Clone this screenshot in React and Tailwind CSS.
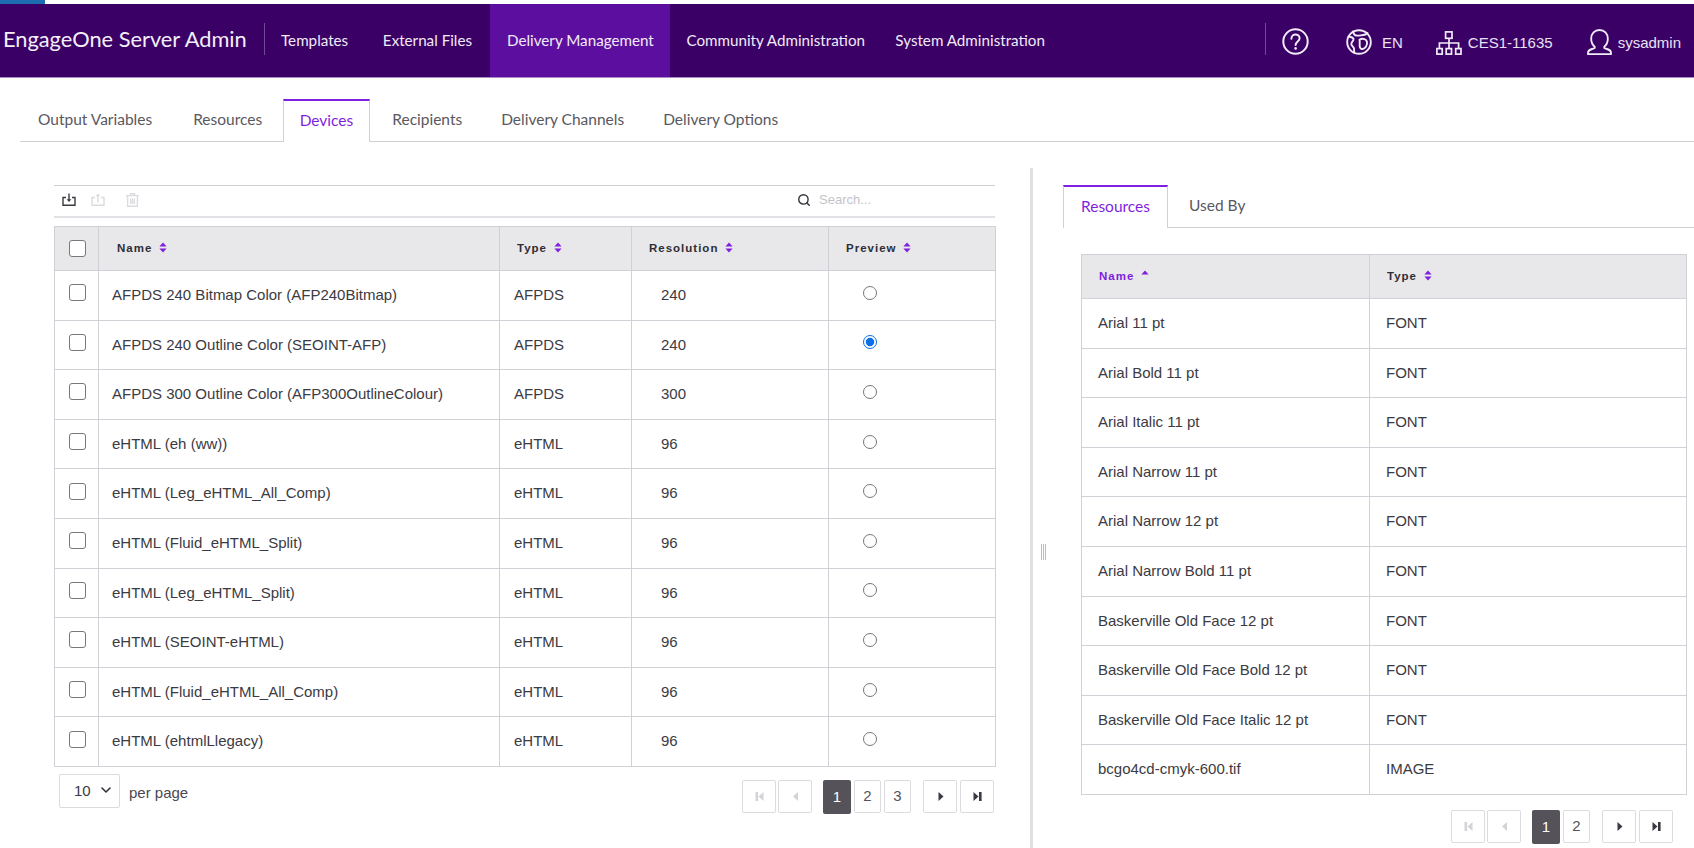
import React from "react";
import { Search, ChevronDown } from "lucide-react";

const BODY = "font-['Liberation_Sans',Arial,sans-serif]";
const GEO = "font-['Lato','Noto_Sans',sans-serif]";

const leftRows = [
  ["AFPDS 240 Bitmap Color (AFP240Bitmap)", "AFPDS", "240", false],
  ["AFPDS 240 Outline Color (SEOINT-AFP)", "AFPDS", "240", true],
  ["AFPDS 300 Outline Color (AFP300OutlineColour)", "AFPDS", "300", false],
  ["eHTML (eh (ww))", "eHTML", "96", false],
  ["eHTML (Leg_eHTML_All_Comp)", "eHTML", "96", false],
  ["eHTML (Fluid_eHTML_Split)", "eHTML", "96", false],
  ["eHTML (Leg_eHTML_Split)", "eHTML", "96", false],
  ["eHTML (SEOINT-eHTML)", "eHTML", "96", false],
  ["eHTML (Fluid_eHTML_All_Comp)", "eHTML", "96", false],
  ["eHTML (ehtmlLlegacy)", "eHTML", "96", false],
];

const rightRows = [
  ["Arial 11 pt", "FONT"],
  ["Arial Bold 11 pt", "FONT"],
  ["Arial Italic 11 pt", "FONT"],
  ["Arial Narrow 11 pt", "FONT"],
  ["Arial Narrow 12 pt", "FONT"],
  ["Arial Narrow Bold 11 pt", "FONT"],
  ["Baskerville Old Face 12 pt", "FONT"],
  ["Baskerville Old Face Bold 12 pt", "FONT"],
  ["Baskerville Old Face Italic 12 pt", "FONT"],
  ["bcgo4cd-cmyk-600.tif", "IMAGE"],
];

function Sort({ up }) {
  return (
    <svg width="8" height="11" viewBox="0 0 8 11" className="inline-block ml-[7px] -mt-[3px] align-middle" fill="#7f1fe0">
      <path d="M4 0.5 L7.6 4.5 H0.4 Z" />
      {!up && <path d="M4 10.5 L7.6 6.5 H0.4 Z" />}
    </svg>
  );
}

function HelpIcon() {
  return (
    <svg width="27" height="27" viewBox="0 0 27 27" fill="none" stroke="#f1ebf8" strokeWidth="2">
      <circle cx="13.5" cy="13.5" r="12.2" />
      <path d="M9.4 10.8c0-2.6 1.9-4.2 4.1-4.2s4.1 1.5 4.1 3.7c0 3.2-4 3.2-4 6.8" strokeLinecap="round" />
      <circle cx="13.6" cy="20.4" r="1.3" fill="#f1ebf8" stroke="none" />
    </svg>
  );
}

function GlobeIcon() {
  return (
    <svg width="26" height="26" viewBox="0 0 26 26" fill="none" stroke="#f1ebf8" strokeWidth="1.9" strokeLinejoin="round" strokeLinecap="round">
      <circle cx="13" cy="13" r="11.8" />
      <path d="M7 2.5c.5 2 1 3.5 3 4 2.5.6 5-.4 7-.5 2-.1 3.5-1 4.5-2" />
      <path d="M2.5 7.5c2 .5 4.5.5 5 2.5.4 1.8-2.2 2.8-2.2 5 0 2 2.3 2.5 2.7 4.5.3 1.6-.2 3 .5 4.5" />
      <path d="M13.5 10.5c3.5-1.5 7-.5 7.5 2.5.5 3-1.5 6.5-4.5 7-1.7.3-2.6-1-2.8-2.8-.2-2 .3-4.7-.2-6.7z" />
    </svg>
  );
}

function NetworkIcon() {
  return (
    <svg width="26" height="24" viewBox="0 0 26 24" fill="none" stroke="#f1ebf8" strokeWidth="1.7">
      <rect x="9.6" y="0.9" width="6.4" height="6.4" />
      <path d="M13 7.3V12M3.4 17V12H22.6V17M13 12V17" />
      <rect x="0.9" y="17.6" width="5.3" height="5.5" />
      <rect x="10.2" y="17.6" width="5.3" height="5.5" />
      <rect x="19.7" y="17.6" width="5.3" height="5.5" />
    </svg>
  );
}

function UserIcon() {
  return (
    <svg width="25" height="26" viewBox="0 0 24 25" fill="none" stroke="#f1ebf8" strokeWidth="1.8" strokeLinejoin="round">
      <path d="M12 1c-4.6 0-8 3.4-8 8.4 0 3.4 1.4 6 3.4 7.6v1.2c-2 1.4-6.4 1.2-6.4 4.4v1.7h22v-1.7c0-3.2-4.4-3-6.4-4.4V17c2-1.6 3.4-4.2 3.4-7.6C20 4.4 16.6 1 12 1z" />
    </svg>
  );
}

function DownloadTray() {
  return (
    <svg width="14" height="13" viewBox="0 0 14 13" fill="none" stroke="#3a3a42" strokeWidth="1.4">
      <path d="M4 4.5H1v7.8h12V4.5h-3" />
      <path d="M7 .5v7" />
      <path d="M4.6 6.2 7 9l2.4-2.8z" fill="#3a3a42" stroke="none" />
    </svg>
  );
}

function UploadTray() {
  return (
    <svg width="14" height="13" viewBox="0 0 14 13" fill="none" stroke="#dcdce0" strokeWidth="1.4">
      <path d="M4 4.5H1v7.8h12V4.5h-3" />
      <path d="M7 9.5v-7" />
      <path d="M4.6 3.2 7 .4l2.4 2.8z" fill="#dcdce0" stroke="none" />
    </svg>
  );
}

function Trash() {
  return (
    <svg width="13" height="14" viewBox="0 0 13 14" fill="none" stroke="#dcdce0" strokeWidth="1.4">
      <path d="M0 2.6h13M4.5 2.4V.8h4v1.6" />
      <path d="M1.6 3v10.2h9.8V3" />
      <path d="M4.6 5.4v5.6M6.5 5.4v5.6M8.4 5.4v5.6" />
    </svg>
  );
}

function PageArrow({ kind, muted }) {
  const c = muted ? "#d4d4d8" : "#3a3a42";
  const paths = {
    first: "M2.5 2h2.6v9H2.5z M10.5 2v9L5.5 6.5z",
    prev: "M9 2v9L4 6.5z",
    next: "M4.5 2v9l5-4.5z",
    last: "M2.5 2v9l5-4.5z M8 2h2.6v9H8z",
  };
  return (
    <svg width="13" height="13" viewBox="0 0 13 13" fill={c}>
      <path d={paths[kind]} />
    </svg>
  );
}

function Arrow({ kind, muted, w }) {
  return (
    <button className={`${w} h-[33px] flex items-center justify-center bg-white border border-[#dcdce0] rounded-[2px]`}>
      <PageArrow kind={kind} muted={muted} />
    </button>
  );
}

function Num({ n, active }) {
  return (
    <button
      className={
        active
          ? `w-[28px] h-[34px] flex items-center justify-center bg-[#55525a] rounded-[2px] text-white text-[15px] ${BODY}`
          : `w-[27px] h-[33px] flex items-center justify-center bg-white border border-[#dcdce0] rounded-[2px] text-[#55525a] text-[15px] ${BODY}`
      }
    >
      {n}
    </button>
  );
}

function Pager({ pages }) {
  return (
    <div className="flex items-center">
      <div className="flex gap-[2px]">
        <Arrow kind="first" muted w="w-[34px]" />
        <Arrow kind="prev" muted w="w-[34px]" />
      </div>
      <div className="flex gap-[3px] ml-[11px]">
        {pages.map((p, i) => (
          <Num key={p} n={p} active={i === 0} />
        ))}
      </div>
      <div className="flex gap-[3px] ml-[12px]">
        <Arrow kind="next" w="w-[34px]" />
        <Arrow kind="last" w="w-[34px]" />
      </div>
    </div>
  );
}

const Check = () => (
  <input type="checkbox" className="appearance-none block w-[17px] h-[17px] bg-white border border-[#77777c] rounded-[3px]" />
);

const th = "h-[44px] border border-[#d0d0d6] bg-[#e8e8ea] text-left text-[11.5px] font-bold tracking-[1px] text-[#2f2d36] p-0";
const td = "h-[49.6px] border border-[#d0d0d6] p-0 text-[15px] text-[#3c3a42]";

export default function App() {
  return (
    <div className={`h-[848px] w-[1694px] flex flex-col bg-white overflow-hidden ${BODY}`}>
      <div className="h-[4px] shrink-0 bg-white">
        <div className="w-[45px] h-[4px] bg-[#1b6cb0]" />
      </div>

      <header className="h-[74px] shrink-0 flex items-stretch bg-[#3a0066] border-b border-[#a98cc6]">
        <div className="flex items-center pl-[3px] w-[264px] shrink-0">
          <span className={`text-[21.8px] leading-none -mt-[4px] text-[#f4eff9] ${GEO}`}>EngageOne Server Admin</span>
        </div>
        <div className="w-px h-[32px] self-center bg-[#6d4a92] -mt-[4px]" />
        <nav className={`flex items-stretch text-[15.2px] text-[#f1ebf7] ${GEO}`}>
          <a className="flex items-center pl-[16px] pr-[18px]">Templates</a>
          <a className="flex items-center pl-[16.7px] pr-[18px]">External Files</a>
          <a className="flex items-center pl-[17px] pr-[16.4px] bg-[#5c0f9f]">Delivery Management</a>
          <a className="flex items-center pl-[16.2px] pr-[15px]">Community Administration</a>
          <a className="flex items-center pl-[15.3px] pr-[16px]">System Administration</a>
        </nav>
        <div className="flex-1" />
        <div className="w-px h-[32px] self-center bg-[#6d4a92] -mt-[4px]" />
        <div className="flex items-center text-[15px] text-[#e9e0f2] w-[428px] shrink-0 pl-[16px] pt-[2px]">
          <HelpIcon />
          <div className="ml-[37px]"><GlobeIcon /></div>
          <span className="ml-[10px] mt-[3px]">EN</span>
          <div className="ml-[33px] mt-[2px]"><NetworkIcon /></div>
          <span className="ml-[6px] mt-[4px]">CES1-11635</span>
          <div className="ml-[34px]"><UserIcon /></div>
          <span className="ml-[6px] mt-[4px]">sysadmin</span>
        </div>
      </header>

      <div className={`h-[64px] shrink-0 pl-[20px] pt-[21px] ${GEO}`}>
        <div className="h-[43px] flex items-stretch border-b border-[#cfcfd6] text-[15.5px] text-[#5a5860]">
          <span className="px-[18px] pt-[9px]">Output Variables</span>
          <span className="px-[18px] pt-[9px] ml-[5px]">Resources</span>
          <span className="h-[43px] px-[16px] pt-[8px] ml-[2.5px] bg-white border-t-2 border-x border-t-[#7f1fe0] border-x-[#d0d0d6] text-[#7f1fe0]">Devices</span>
          <span className="px-[18px] pt-[9px] ml-[4px]">Recipients</span>
          <span className="px-[18px] pt-[9px] ml-[3px]">Delivery Channels</span>
          <span className="px-[18px] pt-[9px] ml-[3px]">Delivery Options</span>
        </div>
      </div>

      <main className="flex-1 flex pt-[26px] min-h-0">
        <section className="w-[1030px] shrink-0 pl-[54px] pr-[35px] pt-[17px]">
          <div className="h-[33px] flex items-center border-t border-b-2 border-[#e2e2e6] border-t-[#d0d0d4] pl-[8px] pb-[3px]">
            <DownloadTray />
            <div className="ml-[15px]"><UploadTray /></div>
            <div className="ml-[21px]"><Trash /></div>
            <div className="flex-1" />
            <Search size={14} strokeWidth={2.4} color="#33323a" />
            <span className="ml-[8px] w-[176px] text-[13px] text-[#c4c4c8]">Search...</span>
          </div>
          <table className="mt-[8px] w-[941px] table-fixed border-collapse">
            <colgroup>
              <col className="w-[44px]" />
              <col className="w-[401px]" />
              <col className="w-[132px]" />
              <col className="w-[197px]" />
              <col className="w-[167px]" />
            </colgroup>
            <thead>
              <tr>
                <th className={th}><div className="pl-[14px]"><Check /></div></th>
                <th className={th}><div className="pl-[18px]">Name<Sort /></div></th>
                <th className={th}><div className="pl-[17px]">Type<Sort /></div></th>
                <th className={th}><div className="pl-[17px]">Resolution<Sort /></div></th>
                <th className={th}><div className="pl-[17px]">Preview<Sort /></div></th>
              </tr>
            </thead>
            <tbody>
              {leftRows.map((r) => (
                <tr key={r[0]}>
                  <td className={td}><div className="pl-[14px] -mt-[5px]"><Check /></div></td>
                  <td className={td}><div className="pl-[13px]">{r[0]}</div></td>
                  <td className={td}><div className="pl-[14px]">{r[1]}</div></td>
                  <td className={td}><div className="pl-[29px]">{r[2]}</div></td>
                  <td className={td}>
                    <div className="pl-[34px] -mt-[5px]">
                      <input type="radio" name="preview" defaultChecked={r[3]} className="block m-0 w-[14px] h-[14px] accent-[#0a6fe8]" />
                    </div>
                  </td>
                </tr>
              ))}
            </tbody>
          </table>
          <div className="flex items-start justify-between mt-[7px]">
            <div className="flex items-center ml-[5px] text-[15px] text-[#4a4850]">
              <div className="relative w-[61px] h-[34px]">
                <select className="appearance-none w-full h-full pl-[14px] bg-white border border-[#dcdce0] rounded-[2px] text-[15px] text-[#3c3a42]">
                  <option>10</option>
                  <option>25</option>
                  <option>50</option>
                </select>
                <ChevronDown size={16} strokeWidth={2.4} color="#33323a" className="absolute right-[6px] top-[8px] pointer-events-none" />
              </div>
              <span className="ml-[9px] mt-[5px]">per page</span>
            </div>
            <div className="mt-[6px] mr-[1px]">
              <Pager pages={[1, 2, 3]} />
            </div>
          </div>
        </section>

        <div className="relative w-[3px] shrink-0 bg-[#e0e0e2]">
          <div className="absolute left-[11px] top-[376px] w-[5px] h-[16px] border-x border-[#bbbbbf] flex justify-center">
            <div className="w-px h-full bg-[#bbbbbf]" />
          </div>
        </div>

        <section className="flex-1 min-w-0 pt-[17px]">
          <div className={`h-[43px] ml-[30px] flex items-stretch border-b border-[#cfcfd6] text-[15.5px] text-[#5a5860] ${GEO}`}>
            <span className="h-[43px] px-[17px] pt-[8px] bg-white border-t-2 border-x border-t-[#7f1fe0] border-x-[#d0d0d6] text-[#7f1fe0]">Resources</span>
            <span className="pl-[21px] pt-[9px]">Used By</span>
          </div>
          <div className="pl-[48px] pr-[8px]">
            <table className="mt-[26px] w-[605px] table-fixed border-collapse">
              <colgroup>
                <col className="w-[288px]" />
                <col className="w-[317px]" />
              </colgroup>
              <thead>
                <tr>
                  <th className={`${th} text-[#7f1fe0]`}><div className="pl-[17px] pt-[1px]">Name<Sort up /></div></th>
                  <th className={th}><div className="pl-[17px] pt-[1px]">Type<Sort /></div></th>
                </tr>
              </thead>
              <tbody>
                {rightRows.map((r) => (
                  <tr key={r[0]}>
                    <td className={td}><div className="pl-[16px]">{r[0]}</div></td>
                    <td className={td}><div className="pl-[16px]">{r[1]}</div></td>
                  </tr>
                ))}
              </tbody>
            </table>
            <div className="flex justify-end mt-[15px] pr-[13px]">
              <Pager pages={[1, 2]} />
            </div>
          </div>
        </section>
      </main>
    </div>
  );
}
